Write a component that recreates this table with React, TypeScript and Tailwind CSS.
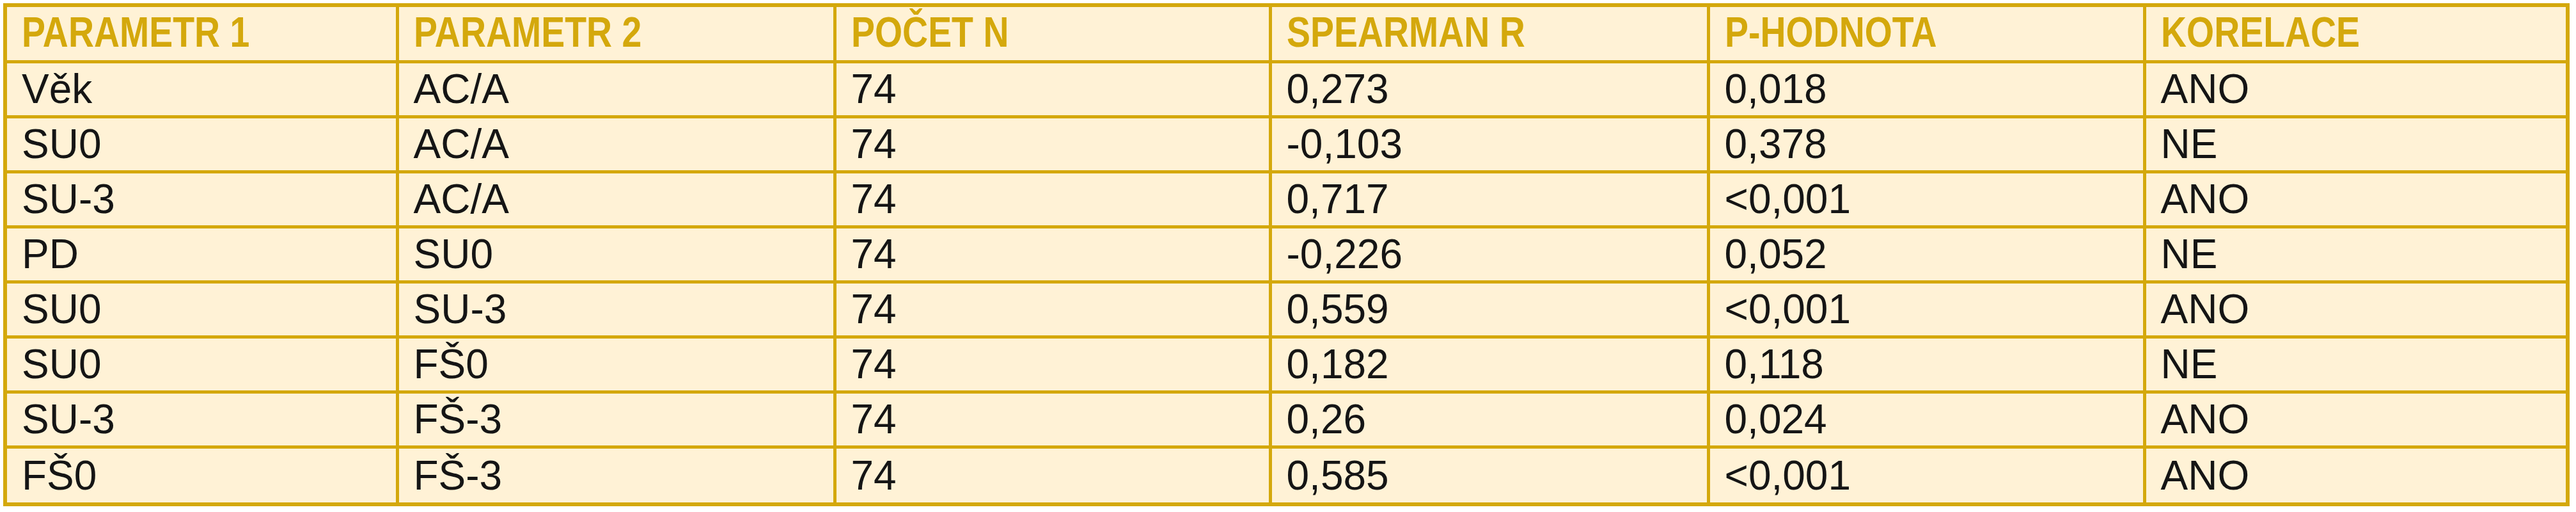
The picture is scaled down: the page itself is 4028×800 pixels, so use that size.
const headers = ["PARAMETR 1", "PARAMETR 2", "POČET N", "SPEARMAN R", "P-HODNOTA", "KORELACE"];

const rows: string[][] = [
  ["Věk", "AC/A", "74", "0,273", "0,018", "ANO"],
  ["SU0", "AC/A", "74", "-0,103", "0,378", "NE"],
  ["SU-3", "AC/A", "74", "0,717", "<0,001", "ANO"],
  ["PD", "SU0", "74", "-0,226", "0,052", "NE"],
  ["SU0", "SU-3", "74", "0,559", "<0,001", "ANO"],
  ["SU0", "FŠ0", "74", "0,182", "0,118", "NE"],
  ["SU-3", "FŠ-3", "74", "0,26", "0,024", "ANO"],
  ["FŠ0", "FŠ-3", "74", "0,585", "<0,001", "ANO"],
];

const colWidths = ["w-[613px]", "w-[684px]", "w-[681px]", "w-[685px]", "w-[682px]", "w-[662px]"];

export default function App() {
  return (
    <div className="w-[4028px] h-[800px] bg-white pl-[5px] pt-[5px]">
      <table className="w-[4012px] table-fixed border-collapse border-[6px] border-[#d4a80c] bg-[#fff2d6]">
        <colgroup>
          {colWidths.map((w, i) => (
            <col key={i} className={w} />
          ))}
        </colgroup>
        <thead>
          <tr className="h-[88px]">
            {headers.map((h) => (
              <th
                key={h}
                className="border-[5px] border-[#d4a80c] pl-[23px] pb-[4px] text-left align-middle text-[66px] font-bold leading-none text-[#d4a80c] font-['Liberation_Sans',sans-serif] whitespace-nowrap"
              >
                {/* condensed look of the printed header face */}
                <span className="inline-block origin-left scale-x-[0.84]">{h}</span>
              </th>
            ))}
          </tr>
        </thead>
        <tbody>
          {rows.map((row, r) => (
            <tr key={r} className={r === rows.length - 1 ? "h-[90px]" : "h-[86px]"}>
              {row.map((cell, c) => (
                <td
                  key={c}
                  className="border-[5px] border-[#d4a80c] pl-[23px] text-left align-middle text-[64px] leading-none text-[#151515] font-['Liberation_Sans',sans-serif] whitespace-nowrap"
                >
                  {cell}
                </td>
              ))}
            </tr>
          ))}
        </tbody>
      </table>
    </div>
  );
}
